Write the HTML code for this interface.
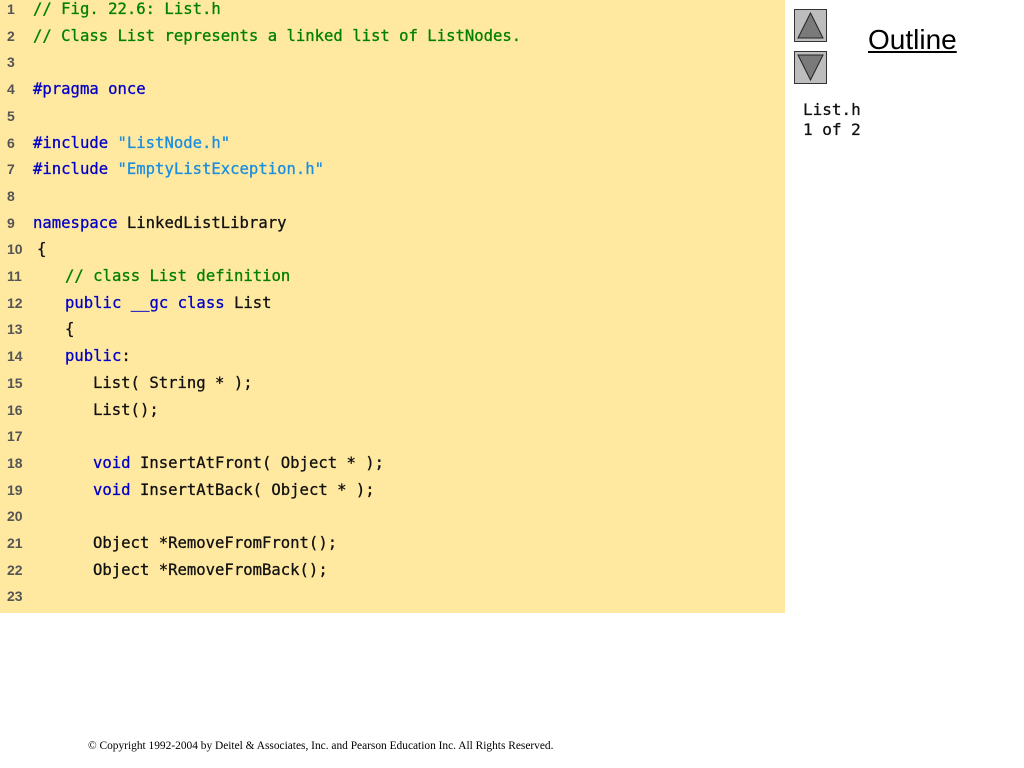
<!DOCTYPE html>
<html><head><style>
body{margin:0;width:1024px;height:768px;background:#fff;position:relative;overflow:hidden;font-family:"Liberation Sans",sans-serif}
#code{position:absolute;left:0;top:0;width:785px;height:613px;background:#FFE8A0}
.l{position:absolute;left:0;height:26px;white-space:pre;font:15.6px/26px "DejaVu Sans Mono",monospace;color:#111;-webkit-text-stroke:0.3px}
.n{position:absolute;left:7px;width:22px;font:bold 14px/26px "Liberation Sans",sans-serif;color:#555;-webkit-text-stroke:0}
.c{position:absolute;left:33px}
.g{color:#008000}.k{color:#0000c8}.s{color:#1a8ee0}
.btn{position:absolute;left:794px;width:33px;height:33px;background:#bdbdbd;border:1px solid #333;box-sizing:border-box}
</style></head><body>
<div id="code">
<div class="l" style="top:-4px"><span class="n">1</span><span class="c g">// Fig. 22.6: List.h</span></div>
<div class="l" style="top:22.7px"><span class="n">2</span><span class="c g">// Class List represents a linked list of ListNodes.</span></div>
<div class="l" style="top:49.4px"><span class="n">3</span></div>
<div class="l" style="top:76.1px"><span class="n">4</span><span class="c k">#pragma once</span></div>
<div class="l" style="top:102.8px"><span class="n">5</span></div>
<div class="l" style="top:129.5px"><span class="n">6</span><span class="c"><span class="k">#include</span> <span class="s">"ListNode.h"</span></span></div>
<div class="l" style="top:156.2px"><span class="n">7</span><span class="c"><span class="k">#include</span> <span class="s">"EmptyListException.h"</span></span></div>
<div class="l" style="top:182.9px"><span class="n">8</span></div>
<div class="l" style="top:209.6px"><span class="n">9</span><span class="c"><span class="k">namespace</span> LinkedListLibrary</span></div>
<div class="l" style="top:236.3px"><span class="n">10</span><span class="c" style="left:37px">{</span></div>
<div class="l" style="top:263px"><span class="n">11</span><span class="c g" style="left:65px">// class List definition</span></div>
<div class="l" style="top:289.7px"><span class="n">12</span><span class="c" style="left:65px"><span class="k">public __gc class</span> List</span></div>
<div class="l" style="top:316.4px"><span class="n">13</span><span class="c" style="left:65px">{</span></div>
<div class="l" style="top:343.1px"><span class="n">14</span><span class="c" style="left:65px"><span class="k">public</span>:</span></div>
<div class="l" style="top:369.8px"><span class="n">15</span><span class="c" style="left:93px">List( String * );</span></div>
<div class="l" style="top:396.5px"><span class="n">16</span><span class="c" style="left:93px">List();</span></div>
<div class="l" style="top:423.2px"><span class="n">17</span></div>
<div class="l" style="top:449.9px"><span class="n">18</span><span class="c" style="left:93px"><span class="k">void</span> InsertAtFront( Object * );</span></div>
<div class="l" style="top:476.6px"><span class="n">19</span><span class="c" style="left:93px"><span class="k">void</span> InsertAtBack( Object * );</span></div>
<div class="l" style="top:503.3px"><span class="n">20</span></div>
<div class="l" style="top:530px"><span class="n">21</span><span class="c" style="left:93px">Object *RemoveFromFront();</span></div>
<div class="l" style="top:556.7px"><span class="n">22</span><span class="c" style="left:93px">Object *RemoveFromBack();</span></div>
<div class="l" style="top:583.4px"><span class="n">23</span></div>
</div>
<div class="btn" style="top:9px"><svg width="31" height="31" style="display:block"><polygon points="15.5,3 28,28 3,28" fill="#7a7a7a" stroke="#222" stroke-width="1"/></svg></div>
<div class="btn" style="top:51px"><svg width="31" height="31" style="display:block"><polygon points="3,3 28,3 15.5,28" fill="#7a7a7a" stroke="#222" stroke-width="1"/></svg></div>
<div style="position:absolute;left:868px;top:24px;font-size:28px;text-decoration:underline;color:#000">Outline</div>
<div style="position:absolute;left:803px;top:100px;font:16px/20px 'DejaVu Sans Mono',monospace;-webkit-text-stroke:0.3px;color:#111">List.h<br>1 of 2</div>
<div style="position:absolute;left:88px;top:740px;font:11.4px 'Liberation Serif',serif;color:#000">© Copyright 1992-2004 by Deitel &amp; Associates, Inc. and Pearson Education Inc. All Rights Reserved.</div>
</body></html>
